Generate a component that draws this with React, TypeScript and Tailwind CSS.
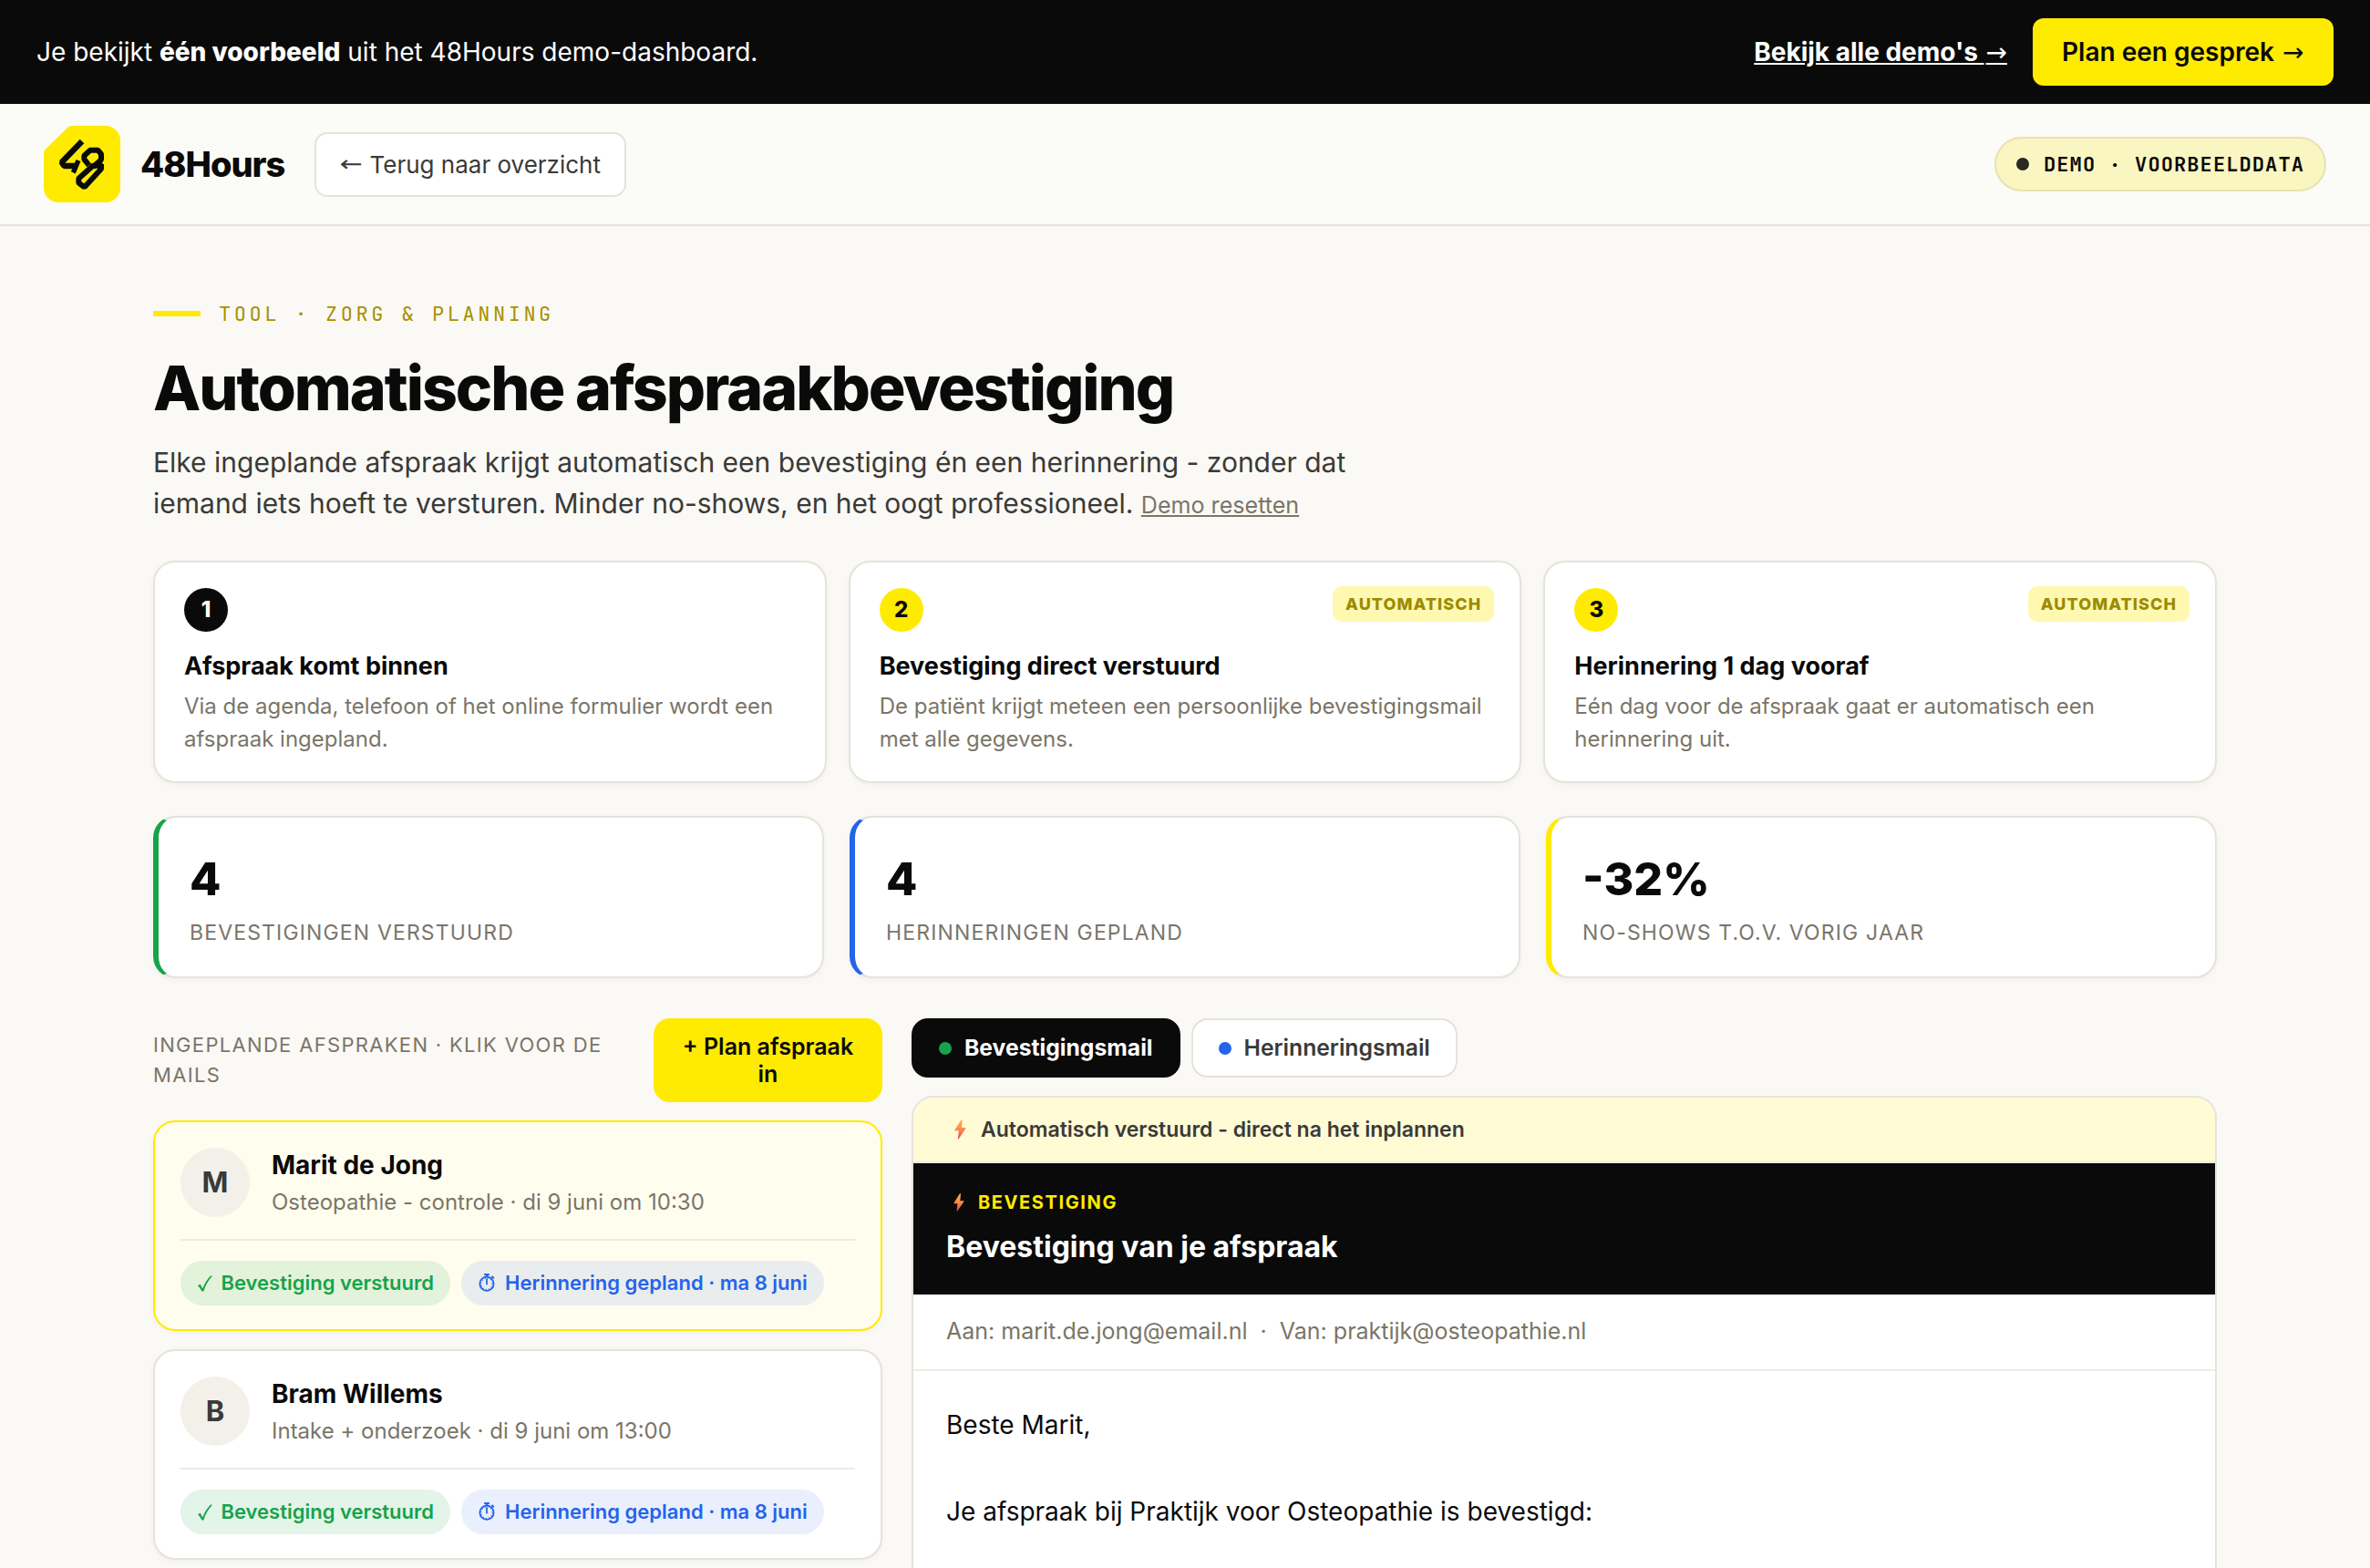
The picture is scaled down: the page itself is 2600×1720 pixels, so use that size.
import React from "react";

const MONO = "font-['JetBrains_Mono','DejaVu_Sans_Mono',monospace]";

function Logo() {
  return (
    <svg viewBox="24 24 252 252" className="size-[84px] shrink-0">
      <path
        d="M116 24H228A48 48 0 0 1 276 72V228A48 48 0 0 1 228 276H72A48 48 0 0 1 24 228V114Q24 107 29 102L103 29Q108 24 116 24Z"
        fill="#ffeb00"
      />
      <g fill="none" stroke="#0a0a0a" strokeWidth="19" strokeLinejoin="bevel">
        <path d="M150 75L83 144L91 156H128" />
        <path d="M138 138L121 178" strokeWidth="16" />
        <path d="M173 154L157 134V122L177 104H202L213 117V136L186 160" strokeWidth="18" />
        <path d="M218 155H186L139 197V212L158 226L213 166V150" strokeWidth="18" />
      </g>
    </svg>
  );
}

function Bolt({ className }: { className: string }) {
  return (
    <svg viewBox="0 0 13 22" className={className}>
      <defs>
        <linearGradient id="bolt" x1="0" y1="0" x2="0" y2="1">
          <stop offset="0" stopColor="#ffb84a" />
          <stop offset="0.5" stopColor="#fb8a44" />
          <stop offset="1" stopColor="#f4445c" />
        </linearGradient>
      </defs>
      <path d="M7.6 0.3L0.4 11.6Q0.1 12.3 0.8 12.3H4.8L3.9 21.3Q4.2 22 4.8 21.3L12.5 9.8Q12.8 9 12 9H8L8.6 0.7Q8.3 -0.2 7.6 0.3Z" fill="url(#bolt)" />
    </svg>
  );
}

function Check() {
  return (
    <svg viewBox="0 0 16 18" className="mr-[10px] ml-[0.5px] h-[18px] w-4" fill="#16a34a">
      <path d="M0 11.2L2.8 9.8L5.2 14.4C7.4 8.8 10.4 4 14 0.4L15.9 0.8C11.4 5.6 8.3 11 6.4 17.6H4.4C3.4 15.2 1.9 13 0 11.2Z" />
    </svg>
  );
}

function Stopwatch() {
  return (
    <svg viewBox="0 0 18 20" className="mr-[11px] mb-[2px] ml-[1px] h-5 w-[18px]" fill="none" stroke="#2563eb">
      <circle cx="9" cy="11.3" r="7.6" strokeWidth="1.8" />
      <circle cx="9" cy="11.3" r="6.2" strokeWidth="1.3" strokeDasharray="1 2.25" />
      <path d="M9 5.5V12.2" strokeWidth="1.8" />
      <path d="M6.2 1H11.8" strokeWidth="2" />
      <path d="M9 1V4" strokeWidth="2.6" />
      <path d="M14.4 3L16.8 5.2" strokeWidth="2.2" />
    </svg>
  );
}

function Arrow() {
  return <span className="pl-[2px] font-['DejaVu_Sans',sans-serif] text-[28px] leading-none font-normal">→</span>;
}

const steps = [
  { n: "1", auto: false, title: "Afspraak komt binnen", text: "Via de agenda, telefoon of het online formulier wordt een afspraak ingepland." },
  { n: "2", auto: true, title: "Bevestiging direct verstuurd", text: "De patiënt krijgt meteen een persoonlijke bevestigingsmail met alle gegevens." },
  { n: "3", auto: true, title: "Herinnering 1 dag vooraf", text: "Eén dag voor de afspraak gaat er automatisch een herinnering uit." },
];

const stats = [
  { value: "4", label: "Bevestigingen verstuurd", edge: "border-l-[#16a34a]" },
  { value: "4", label: "Herinneringen gepland", edge: "border-l-[#2563eb]" },
  { value: "-32%", label: "No-shows t.o.v. vorig jaar", edge: "border-l-[#ffeb00]" },
];

const appointments = [
  { initial: "M", name: "Marit de Jong", info: "Osteopathie - controle · di 9 juni om 10:30", active: true },
  { initial: "B", name: "Bram Willems", info: "Intake + onderzoek · di 9 juni om 13:00", active: false },
];

const SHADOW = "shadow-[0_2px_6px_rgba(10,10,10,0.04)]";

export default function App() {
  return (
    <div className="h-[1720px] w-[2600px] overflow-hidden bg-[#faf9f5] font-['Inter',sans-serif] text-[28px] leading-[1.5] text-[#0a0a0a]">
      <div className="flex h-[114px] items-center bg-[#0a0a0a] px-10 text-white">
        <p>
          Je bekijkt <strong className="font-extrabold">één voorbeeld</strong> uit het 48Hours demo-dashboard.
        </p>
        <a className="mr-7 ml-auto font-bold underline">
          Bekijk alle demo's <Arrow />
        </a>
        <a className="h-[74px] w-[330px] rounded-[12px] bg-[#ffeb00] py-5 pl-8 leading-[34px] font-semibold whitespace-nowrap text-[#0a0a0a]">
          Plan een gesprek <Arrow />
        </a>
      </div>

      <header className="flex h-[134px] items-center border-b-2 border-[#e5e3da] bg-[#fbfcf7] px-12">
        <Logo />
        <span className="ml-[22px] w-[159px] text-[38px] font-extrabold tracking-[-0.026em]">48Hours</span>
        <a className="ml-8 flex h-[71px] w-[342px] items-center rounded-[14px] border-2 border-[#e5e3da] bg-white px-[26px] text-[26px] whitespace-nowrap text-[#3a3a38]">
          <span className="mr-[8px] inline-block w-[26px] scale-x-125 text-center font-['DejaVu_Sans',sans-serif] text-[24px]">←</span>
          Terug naar overzicht
        </a>
        <div className={`mr-0 ml-auto flex h-[60px] items-center gap-4 rounded-full border-2 border-[#e8e2b0] bg-[#faf6c2] px-[22px] text-[22px] font-bold tracking-[0.05em] ${MONO}`}>
          <span className="size-[14px] rounded-full bg-[#2a2820]" />
          <span>DEMO · VOORBEELDDATA</span>
        </div>
      </header>

      <main className="mx-[168px] pt-20">
        <div className={`flex h-[33px] items-center gap-5 text-[22px] tracking-[0.16em] text-[#a89000] ${MONO}`}>
          <span className="mb-px h-[6px] w-[52px] bg-[#ffeb00]" />
          <span>TOOL · ZORG &amp; PLANNING</span>
        </div>
        <h1 className="mt-[27px] text-[68px] leading-[75px] font-extrabold tracking-[-0.03em]">Automatische afspraakbevestiging</h1>
        <p className="mt-[22px] w-[1360px] text-[30px] leading-[45px] text-[#3a3a38]">
          Elke ingeplande afspraak krijgt automatisch een bevestiging én een herinnering - zonder dat iemand iets hoeft te versturen. Minder no-shows, en het oogt professioneel.{" "}
          <a className="text-[25.1px] leading-none text-[#7a7568] underline">Demo resetten</a>
        </p>

        <section className="mt-10 grid grid-cols-3 gap-6">
          {steps.map((s) => (
            <div key={s.n} className={`relative h-[244px] rounded-[24px] border-2 border-[#e5e3da] bg-white px-8 py-7 ${SHADOW}`}>
              <div className={`flex size-12 items-center justify-center rounded-full text-[24px] font-extrabold ${s.auto ? "bg-[#ffeb00]" : "bg-[#0a0a0a] text-white"}`}>{s.n}</div>
              {s.auto && (
                <span className="absolute top-[26px] right-7 rounded-[10px] bg-[#fff8b0] px-[14px] py-[6px] text-[18px] leading-[27px] font-extrabold tracking-[0.06em] text-[#9a8b00]">
                  AUTOMATISCH
                </span>
              )}
              <h3 className="mt-[17px] text-[27px] leading-[42px] font-bold">{s.title}</h3>
              <p className="mt-[5px] text-[24px] text-[#7a7568]">{s.text}</p>
            </div>
          ))}
        </section>

        <section className="mt-9 grid grid-cols-3 gap-7">
          {stats.map((s) => (
            <div key={s.label} className={`h-[178px] rounded-[24px] border-2 border-l-[6px] border-[#e5e3da] bg-white px-[34px] pt-[33px] ${s.edge} ${SHADOW}`}>
              <div className="text-[50px] leading-[68px] font-extrabold">{s.value}</div>
              <div className="mt-2 text-[23px] tracking-[0.05em] text-[#7a7568] uppercase">{s.label}</div>
            </div>
          ))}
        </section>

        <section className="mt-11 grid grid-cols-[800px_1432px] gap-8">
          <div className="flex flex-col gap-5">
            <div className="flex h-[92px] items-center justify-between">
              <h2 className="w-[520px] text-[22px] tracking-[0.06em] text-[#7a7568] uppercase">Ingeplande afspraken · klik voor de mails</h2>
              <button className="h-[92px] w-[251px] rounded-[18px] bg-[#ffeb00] px-7 text-[25px] leading-[30px] font-semibold">+ Plan afspraak in</button>
            </div>
            {appointments.map((a) => (
              <article
                key={a.name}
                className={`rounded-[24px] border-2 px-7 py-[26px] ${SHADOW} ${a.active ? "border-[#ffeb00] bg-[#fffdee]" : "border-[#e5e3da] bg-white"}`}
              >
                <div className="flex h-20 items-center gap-6">
                  <span className="flex size-[76px] items-center justify-center rounded-full bg-[#f3f0ea] text-[31px] font-bold text-[#3a3a38]">{a.initial}</span>
                  <div>
                    <div className="text-[28px] leading-[42px] font-bold">{a.name}</div>
                    <div className="mt-[2px] text-[24px] text-[#7a7568]">{a.info}</div>
                  </div>
                </div>
                <div className="mt-[22px] flex gap-3 border-t-2 border-[#eeebe5] pt-[22px] text-[22px] font-semibold">
                  <span className="flex h-[49px] items-center rounded-full bg-[#16a34a]/12 px-[18px] text-[#16a34a]">
                    <Check />
                    Bevestiging verstuurd
                  </span>
                  <span className="flex h-[49px] items-center rounded-full bg-[#2563eb]/10 px-[18px] text-[#2563eb]">
                    <Stopwatch />
                    Herinnering gepland · ma 8 juni
                  </span>
                </div>
              </article>
            ))}
          </div>

          <div>
            <div className="flex gap-3 text-[24.7px] font-semibold">
              <button className="flex h-[65px] items-center gap-[14px] rounded-[18px] border-2 border-[#0a0a0a] bg-[#0a0a0a] px-7 font-bold text-white">
                <span className="size-[14px] rounded-full bg-[#16a34a]" />
                Bevestigingsmail
              </button>
              <button className="flex h-[65px] items-center gap-[14px] rounded-[18px] border-2 border-[#e5e3da] bg-white px-7 text-[#3a3a38]">
                <span className="size-[14px] rounded-full bg-[#2563eb]" />
                Herinneringsmail
              </button>
            </div>
            <div className="mt-5 h-[600px] overflow-hidden rounded-[24px] border-2 border-[#e5e3da] bg-white">
              <div className="flex h-[72px] items-center border-b-2 border-[#eeebe5] bg-[#fffbd4] px-9 text-[23px] font-semibold text-[#3a3a38]">
                <Bolt className="mr-[16px] ml-[9px] h-[22px] w-[13px]" />
                Automatisch verstuurd - direct na het inplannen
              </div>
              <div className="h-[144px] bg-[#0a0a0a] px-9 pt-7">
                <div className="flex h-[30px] items-center text-[20px] font-bold tracking-[0.08em] text-[#ffeb00]">
                  <Bolt className="mr-[15px] ml-[8px] h-[20px] w-[12px]" />
                  BEVESTIGING
                </div>
                <div className="mt-[10px] text-[32px] leading-[48px] font-bold text-white">Bevestiging van je afspraak</div>
              </div>
              <div className="flex h-[84px] items-center border-b-2 border-[#eeebe5] px-9 text-[25px] text-[#7a7568]">
                Aan: marit.de.jong@email.nl&nbsp; ·&nbsp; Van: praktijk@osteopathie.nl
              </div>
              <div className="px-9 pt-9 leading-[1.7]">
                <p>Beste Marit,</p>
                <p className="mt-[1.7em]">Je afspraak bij Praktijk voor Osteopathie is bevestigd:</p>
              </div>
            </div>
          </div>
        </section>
      </main>
    </div>
  );
}
